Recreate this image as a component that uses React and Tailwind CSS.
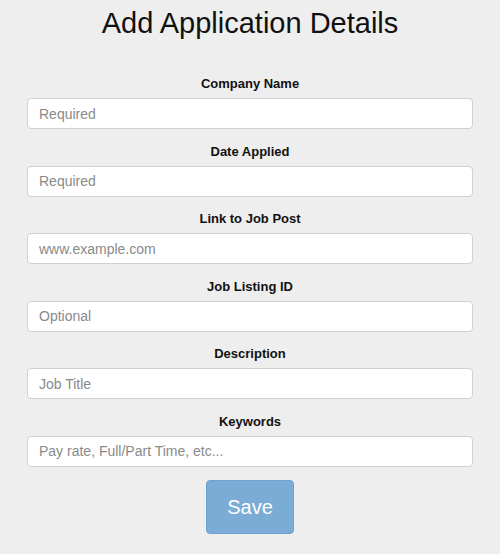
import React from "react";

const fields = [
  { label: "Company Name", placeholder: "Required" },
  { label: "Date Applied", placeholder: "Required" },
  { label: "Link to Job Post", placeholder: "www.example.com" },
  { label: "Job Listing ID", placeholder: "Optional" },
  { label: "Description", placeholder: "Job Title" },
  { label: "Keywords", placeholder: "Pay rate, Full/Part Time, etc..." },
];

export default function App() {
  return (
    <div
      className="min-h-[554px] w-[500px] bg-[#eeeeee] text-[#111]"
      style={{ fontFamily: '"Liberation Sans", Arial, sans-serif' }}
    >
      <h1 className="pt-[7px] text-center text-[29px] leading-[32px] font-normal">
        Add Application Details
      </h1>
      <form className="mt-[36px] px-[27px] flex flex-col">
        {fields.map((f, i) => (
          <div key={i} className={`flex flex-col ${i > 0 ? "mt-[13.6px]" : ""}`}>
            <label className="text-center text-[13px] leading-[18px] font-bold mb-[5px]">
              {f.label}
            </label>
            <input
              type="text"
              placeholder={f.placeholder}
              className="h-[31px] w-full rounded-[4px] border border-[#d0d0d0] bg-white px-[11px] text-[14px] text-[#555] placeholder:text-[#8a8a8a] outline-none"
            />
          </div>
        ))}
        <div className="mt-[13px] flex justify-center">
          <button
            type="button"
            className="h-[54px] w-[88px] rounded-[4px] border border-[#6fa2cf] bg-[#7aacd6] text-[20px] text-white"
          >
            Save
          </button>
        </div>
      </form>
    </div>
  );
}
